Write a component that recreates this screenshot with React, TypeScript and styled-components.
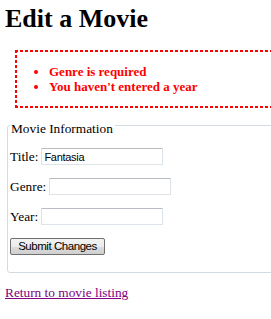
import React from 'react';
import styled, { createGlobalStyle } from 'styled-components';

const GlobalStyle = createGlobalStyle`
  html, body {
    margin: 0;
    padding: 0;
    overflow: hidden;
    background: #fff;
  }
  body {
    font-family: "Liberation Serif", "Times New Roman", serif;
    font-size: 13.33px;
    color: #000;
  }
`;

const Page = styled.div`
  width: 330px;
  padding-left: 5px;
`;

const Title = styled.h1`
  margin: 4px 0 0;
  font-size: 26px;
  font-weight: bold;
  line-height: 30px;
`;

/* short dashes like the old IE dashed border */
const dashH = 'repeating-linear-gradient(90deg, #ff0000 0 3px, transparent 3px 5px)';
const dashV = 'repeating-linear-gradient(180deg, #ff0000 0 3px, transparent 3px 5px)';

const ErrorBox = styled.div`
  margin: 16px 0 0 10px;
  padding: 2px;
  background:
    ${dashH} top left / 100% 2px no-repeat,
    ${dashH} bottom left / 100% 2px no-repeat,
    ${dashV} top left / 2px 100% no-repeat,
    ${dashV} top right / 2px 100% no-repeat;
`;

const ErrorList = styled.ul`
  margin: 12px 0;
  padding-left: 32px;
  list-style: disc;
`;

const ErrorItem = styled.li`
  color: #ff0000;
  font-weight: bold;
  font-size: 13px;
  line-height: 15px;
`;

const Fieldset = styled.fieldset`
  margin: 5px 0 0 2px;
  padding: 0 2px;
  border: 1px solid #d3dbe2;
  border-radius: 3px;
`;

const Legend = styled.legend`
  padding: 8px 2px 0 1px;
  line-height: 16px;
  font-size: 13.33px;
`;

const Form = styled.div`
  display: flex;
  flex-direction: column;
  align-items: flex-start;
  gap: 13px;
  padding: 11px 0 17px;
`;

const Row = styled.div`
  display: flex;
  align-items: center;
  gap: 3px;
  height: 17px;
`;

const Label = styled.label`
  line-height: 15px;
`;

const TextInput = styled.input`
  box-sizing: border-box;
  width: 122px;
  height: 17px;
  margin: 0;
  padding: 0 2px;
  border: 1px solid #dde3e9;
  border-top-color: #b8bcc2;
  border-radius: 1px;
  font-family: "Liberation Sans", Arial, sans-serif;
  font-size: 11px;
  letter-spacing: -0.3px;
  color: #000;
  outline: none;
`;

const SubmitButton = styled.button`
  box-sizing: border-box;
  width: 95px;
  height: 17px;
  margin: 0;
  padding: 0;
  border: 1px solid #707070;
  border-radius: 2px;
  background: linear-gradient(#f2f2f2 0%, #ebebeb 50%, #dddddd 51%, #cfcfcf 100%);
  font-family: "Liberation Sans", Arial, sans-serif;
  font-size: 11.5px;
  letter-spacing: -0.45px;
  color: #000;
  line-height: 15px;
`;

const BackLink = styled.a`
  display: inline-block;
  margin-top: 12px;
  color: #800080;
  text-decoration: underline;
  line-height: 15px;
`;

const fields = [
  { id: 'title', label: 'Title:', value: 'Fantasia' },
  { id: 'genre', label: 'Genre:', value: '' },
  { id: 'year', label: 'Year:', value: '' },
];

const App = () => {
  return (
    <>
      <GlobalStyle />
      <Page>
        <Title>Edit a Movie</Title>
        <ErrorBox>
          <ErrorList>
            <ErrorItem>Genre is required</ErrorItem>
            <ErrorItem>You haven't entered a year</ErrorItem>
          </ErrorList>
        </ErrorBox>
        <Fieldset>
          <Legend>Movie Information</Legend>
          <Form>
            {fields.map((f) => (
              <Row key={f.id}>
                <Label htmlFor={f.id}>{f.label}</Label>
                <TextInput id={f.id} type="text" defaultValue={f.value} />
              </Row>
            ))}
            <SubmitButton type="button">Submit Changes</SubmitButton>
          </Form>
        </Fieldset>
        <BackLink href="#">Return to movie listing</BackLink>
      </Page>
    </>
  );
};

export default App;
